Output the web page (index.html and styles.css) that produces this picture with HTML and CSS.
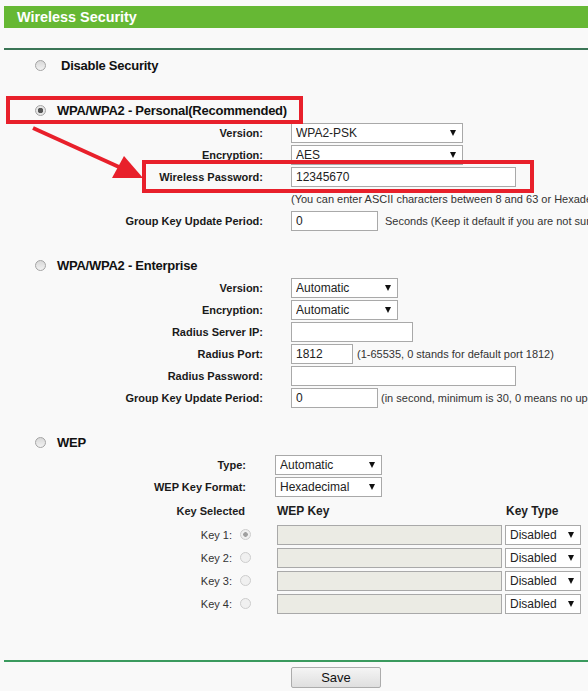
FILE: index.html
```html
<!DOCTYPE html>
<html lang="en">
<head>
    <meta charset="UTF-8">
    <meta name="viewport" content="width=device-width, initial-scale=1.0">
    <title>Wireless Security</title>
    <link rel="stylesheet" href="styles.css">
</head>
<body>

<div class="page">
    <div class="title-bar">Wireless Security</div>
    <div class="rule"></div>

    <!-- Security modes -->
    <div class="mode mode-first">
        <input type="radio" class="radio" name="secType" id="secOff">
        <label for="secOff" class="mode-name mode-name-off">Disable Security</label>
    </div>

    <div class="mode">
        <input type="radio" class="radio" name="secType" id="secPsk" checked>
        <label for="secPsk" class="mode-name">WPA/WPA2 - Personal(Recommended)</label>
    </div>
    <div class="fields">
        <div class="field">
            <span class="field-label">Version:</span>
            <div class="field-value">
                <span class="select-wrap w-172"><select><option>WPA2-PSK</option></select></span>
            </div>
        </div>
        <div class="field">
            <span class="field-label">Encryption:</span>
            <div class="field-value">
                <span class="select-wrap w-172"><select><option>AES</option></select></span>
            </div>
        </div>
        <div class="field">
            <span class="field-label">Wireless Password:</span>
            <div class="field-value">
                <input type="text" class="text-input w-225" value="12345670">
            </div>
        </div>
        <div class="field">
            <span class="field-label"></span>
            <div class="field-value">
                <span class="note">(You can enter ASCII characters between 8 and 63 or Hexadecimal characters between 8 and 64.)</span>
            </div>
        </div>
        <div class="field">
            <span class="field-label">Group Key Update Period:</span>
            <div class="field-value">
                <input type="text" class="text-input w-87" value="0">
                <span class="note note-seconds">Seconds (Keep it default if you are not sure, minimum is 30, 0 means no update)</span>
            </div>
        </div>
    </div>

    <div class="mode mode-gap">
        <input type="radio" class="radio" name="secType" id="secEnt">
        <label for="secEnt" class="mode-name">WPA/WPA2 - Enterprise</label>
    </div>
    <div class="fields">
        <div class="field">
            <span class="field-label">Version:</span>
            <div class="field-value">
                <span class="select-wrap w-107"><select><option>Automatic</option></select></span>
            </div>
        </div>
        <div class="field">
            <span class="field-label">Encryption:</span>
            <div class="field-value">
                <span class="select-wrap w-107"><select><option>Automatic</option></select></span>
            </div>
        </div>
        <div class="field">
            <span class="field-label">Radius Server IP:</span>
            <div class="field-value">
                <input type="text" class="text-input w-122" value="">
            </div>
        </div>
        <div class="field">
            <span class="field-label">Radius Port:</span>
            <div class="field-value">
                <input type="text" class="text-input w-62" value="1812">
                <span class="note note-port">(1-65535, 0 stands for default port 1812)</span>
            </div>
        </div>
        <div class="field">
            <span class="field-label">Radius Password:</span>
            <div class="field-value">
                <input type="text" class="text-input w-225" value="">
            </div>
        </div>
        <div class="field">
            <span class="field-label">Group Key Update Period:</span>
            <div class="field-value">
                <input type="text" class="text-input w-87" value="0">
                <span class="note note-period">(in second, minimum is 30, 0 means no update)</span>
            </div>
        </div>
    </div>

    <div class="mode mode-gap">
        <input type="radio" class="radio" name="secType" id="secWep">
        <label for="secWep" class="mode-name">WEP</label>
    </div>
    <div class="fields fields-wep">
        <div class="field">
            <span class="field-label">Type:</span>
            <div class="field-value">
                <span class="select-wrap w-107"><select><option>Automatic</option></select></span>
            </div>
        </div>
        <div class="field">
            <span class="field-label">WEP Key Format:</span>
            <div class="field-value">
                <span class="select-wrap w-107"><select><option>Hexadecimal</option></select></span>
            </div>
        </div>
    </div>

    <!-- WEP key table -->
    <div class="key-head">
        <span class="kh-selected">Key Selected</span>
        <span class="kh-key">WEP Key</span>
        <span class="kh-type">Key Type</span>
    </div>
    <div class="key-row">
        <span class="key-label">Key 1:</span>
        <input type="radio" class="radio radio-key" name="keySel" checked disabled>
        <input type="text" class="text-input key-input" disabled>
        <span class="select-wrap w-76 key-type"><select><option>Disabled</option></select></span>
    </div>
    <div class="key-row">
        <span class="key-label">Key 2:</span>
        <input type="radio" class="radio radio-key" name="keySel" disabled>
        <input type="text" class="text-input key-input" disabled>
        <span class="select-wrap w-76 key-type"><select><option>Disabled</option></select></span>
    </div>
    <div class="key-row">
        <span class="key-label">Key 3:</span>
        <input type="radio" class="radio radio-key" name="keySel" disabled>
        <input type="text" class="text-input key-input" disabled>
        <span class="select-wrap w-76 key-type"><select><option>Disabled</option></select></span>
    </div>
    <div class="key-row">
        <span class="key-label">Key 4:</span>
        <input type="radio" class="radio radio-key" name="keySel" disabled>
        <input type="text" class="text-input key-input" disabled>
        <span class="select-wrap w-76 key-type"><select><option>Disabled</option></select></span>
    </div>

    <div class="rule rule-bottom"></div>
    <div class="actions">
        <button type="button" class="btn-save">Save</button>
    </div>
</div>

<!-- Red markup drawn over the form -->
<svg class="markup" width="588" height="691" viewBox="0 0 588 691">
    <rect x="8" y="98" width="293" height="24" fill="none" stroke="#e8202b" stroke-width="4"/>
    <rect x="144" y="162" width="388" height="29" fill="none" stroke="#e8202b" stroke-width="4"/>
    <line x1="33" y1="128" x2="119" y2="167" stroke="#e8202b" stroke-width="4"/>
    <polygon points="143,178 112,178 124,156" fill="#e8202b"/>
</svg>

</body>
</html>
```

FILE: styles.css
```css
/* Page basics */
body {
    margin: 0;
    background-color: #f9f9f9;
    font-family: "Liberation Sans", Arial, sans-serif;
    color: #1e1e1e;
    overflow: hidden;
    position: relative;
}

.page {
    margin-left: 4px;
    padding-top: 6px;
    white-space: nowrap;
}

/* Green title bar */
.title-bar {
    height: 22px;
    line-height: 22px;
    background-color: #66b834;
    color: #fff;
    font-size: 14.4px;
    font-weight: bold;
    padding-left: 13px;
}

.rule {
    height: 2px;
    margin-top: 20px;
    background-color: #3b7556;
}

.rule-bottom {
    margin-top: 45px;
    background-color: #3a9a5e;
}

/* Security mode headings */
.mode {
    display: flex;
    align-items: center;
    height: 22px;
    margin-top: 23px;
    padding-left: 31px;
}

.mode-first {
    margin-top: 4px;
}

.mode-gap {
    margin-top: 22px;
}

.mode-name {
    margin-left: 11px;
    font-size: 13px;
    font-weight: bold;
    letter-spacing: -0.25px;
    color: #111;
}

.mode-name-off {
    margin-left: 15px;
}

/* Radio buttons */
.radio {
    appearance: none;
    -webkit-appearance: none;
    width: 11px;
    height: 11px;
    margin: 0;
    border: 1px solid #a4a4a4;
    border-radius: 50%;
    background: linear-gradient(#d8d8d8, #f2f2f2);
    flex-shrink: 0;
}

.radio:checked {
    background: radial-gradient(circle, #555 0, #555 2.5px, #e6e6e6 3px);
}

.radio-key {
    margin-left: 8px;
    border-color: #cdcdcd;
    background: #f0f0f0;
}

.radio-key:checked {
    background: radial-gradient(circle, #a0a0a0 0, #a0a0a0 2px, #f0f0f0 2.6px);
}

/* Label / control rows */
.fields {
    margin-top: 1px;
}

.field {
    display: grid;
    grid-template-columns: 259px auto;
    column-gap: 28px;
    align-items: center;
    height: 22px;
}

.fields-wep .field {
    grid-template-columns: 242px auto;
    column-gap: 29px;
}

.field-label {
    text-align: right;
    font-size: 11px;
    font-weight: bold;
    color: #1a1a1a;
}

.field-value {
    display: flex;
    align-items: center;
}

.note {
    font-size: 11px;
    color: #333;
}

.note-seconds {
    margin-left: 7px;
}

.note-port {
    margin-left: 4px;
}

.note-period {
    margin-left: 3px;
}

/* Inputs and selects */
.text-input {
    box-sizing: border-box;
    height: 20px;
    margin: 0;
    padding: 0 4px;
    border: 1px solid #a9a9a9;
    border-radius: 0;
    background-color: #fff;
    font-family: "Liberation Sans", Arial, sans-serif;
    font-size: 12px;
    color: #222;
    outline: none;
}

.text-input:disabled {
    background-color: #ebebe4;
}

.select-wrap {
    position: relative;
    display: inline-block;
    height: 20px;
}

.select-wrap select {
    appearance: none;
    -webkit-appearance: none;
    box-sizing: border-box;
    width: 100%;
    height: 20px;
    margin: 0;
    padding: 0 0 0 4px;
    border: 1px solid #a9a9a9;
    border-radius: 0;
    background-color: #fff;
    font-family: "Liberation Sans", Arial, sans-serif;
    font-size: 12px;
    color: #222;
}

/* Dropdown arrow */
.select-wrap::after {
    content: "";
    position: absolute;
    right: 7px;
    top: 7px;
    border-left: 3px solid transparent;
    border-right: 3px solid transparent;
    border-top: 6px solid #111;
}

.w-62 { width: 62px; }
.w-76 { width: 76px; }
.w-87 { width: 87px; }
.w-107 { width: 107px; }
.w-122 { width: 122px; }
.w-172 { width: 172px; }
.w-225 { width: 225px; }

/* WEP key table */
.key-head {
    display: flex;
    align-items: center;
    height: 25px;
    font-weight: bold;
}

.kh-selected {
    width: 241px;
    text-align: right;
    font-size: 11px;
}

.kh-key {
    width: 229px;
    margin-left: 32px;
    font-size: 12px;
}

.kh-type {
    font-size: 12px;
}

.key-row {
    display: flex;
    align-items: center;
    height: 23px;
}

.key-label {
    width: 228px;
    text-align: right;
    font-size: 11px;
    color: #333;
}

.key-input {
    width: 225px;
    margin-left: 26px;
}

.key-type {
    margin-left: 3px;
}

/* Save button */
.actions {
    margin-top: 5px;
    padding-left: 287px;
}

.btn-save {
    width: 90px;
    height: 21px;
    padding: 0;
    border: 1px solid #acacac;
    border-radius: 2px;
    background: linear-gradient(#f4f4f4, #dfdfdf);
    font-family: "Liberation Sans", Arial, sans-serif;
    font-size: 13px;
    color: #111;
}

/* Annotation layer */
.markup {
    position: absolute;
    left: 0;
    top: 0;
    pointer-events: none;
}
```
